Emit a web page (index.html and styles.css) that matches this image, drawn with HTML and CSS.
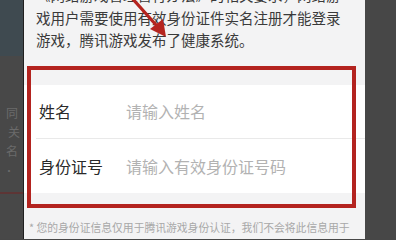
FILE: index.html
```html
<!DOCTYPE html>
<html lang="zh-CN">
<head>
<meta charset="utf-8">
<link rel="stylesheet" href="styles.css">
</head>
<body>
<div class="screen">
  <aside class="backdrop backdrop-left">
    <div class="band"></div>
    <div class="ghost">
      <span class="ghost-line ghost-a">同</span>
      <span class="ghost-line ghost-b">关</span>
      <span class="ghost-line ghost-c">名</span>
      <span class="ghost-line ghost-d">·</span>
    </div>
    <div class="ghost-rule"></div>
  </aside>
  <main class="dialog">
    <p class="intro">《网络游戏管理暂行办法》的相关要求，网络游<br>戏用户需要使用有效身份证件实名注册才能登录<br>游戏，腾讯游戏发布了健康系统。</p>
    <div class="form">
      <div class="row row-first">
        <span class="label">姓名</span>
        <span class="placeholder">请输入姓名</span>
      </div>
      <div class="row">
        <span class="label">身份证号</span>
        <span class="placeholder">请输入有效身份证号码</span>
      </div>
    </div>
    <p class="note">* 您的身份证信息仅用于腾讯游戏身份认证，我们不会将此信息用于</p>
  </main>
  <aside class="backdrop backdrop-right"></aside>
  <div class="annot-box"></div>
  <svg class="annot-arrow" width="44" height="44" viewBox="126 -4 44 44">
    <line x1="131" y1="-3" x2="157" y2="26" stroke="#b5241f" stroke-width="3.2" stroke-linecap="round"/>
    <polygon points="166,37 150,29 163,19" fill="#b5241f"/>
  </svg>
</div>
</body>
</html>
```
FILE: styles.css
```css
html, body {
  margin: 0;
  padding: 0;
}
body {
  width: 396px;
  height: 239px;
  overflow: hidden;
  background: #474747;
  font-family: "Noto Sans CJK SC", "Noto Sans", sans-serif;
}
.screen {
  position: relative;
  display: flex;
  width: 396px;
  height: 239px;
  overflow: hidden;
}
.backdrop {
  background: #484848;
  flex: none;
}
.backdrop-left {
  width: 23px;
  display: flex;
  flex-direction: column;
  overflow: hidden;
}
.band {
  height: 56px;
  background: #3f4a50;
  flex: none;
}
.ghost {
  display: flex;
  flex-direction: column;
  padding-top: 47px;
  font-size: 12px;
  line-height: 19px;
  color: #6b6b6b;
  white-space: nowrap;
}
.ghost-line {
  display: block;
}
.ghost-a { padding-left: 6px; }
.ghost-b { padding-left: 8px; }
.ghost-c { padding-left: 6px; }
.ghost-d { padding-left: 4px; font-size: 10px; line-height: 22px; }
.ghost-rule {
  margin-top: 10px;
  height: 2px;
  background: #5d3535;
}
.backdrop-right {
  width: 31px;
  background: #474747;
}
.dialog {
  width: 341px;
  flex: none;
  background: #f3f3f4;
  border-left: 1px solid #1f1f1f;
  display: flex;
  flex-direction: column;
}
.intro {
  margin: -16px 0 0 0;
  padding-left: 12px;
  font-size: 14.5px;
  line-height: 22.5px;
  color: #3a3a3a;
  white-space: nowrap;
}
.form {
  margin-top: 33px;
  background: #ffffff;
}
.row {
  display: flex;
  align-items: center;
  margin-left: 12px;
  padding-left: 3px;
  height: 54px;
  font-size: 16px;
}
.row-first {
  height: 53px;
  border-bottom: 1px solid #e9e9e9;
}
.label {
  width: 87px;
  flex: none;
  color: #2a2a2a;
}
.placeholder {
  color: #b2b2b2;
}
.note {
  margin: 27px 0 0 0;
  padding-left: 5px;
  font-size: 10.8px;
  line-height: 14px;
  color: #a8a8a8;
  white-space: nowrap;
}
.annot-box {
  position: absolute;
  left: 27px;
  top: 66px;
  width: 329px;
  height: 142px;
  box-sizing: border-box;
  border: 4px solid #b3231f;
}
.annot-arrow {
  position: absolute;
  left: 126px;
  top: -4px;
  display: block;
}
```
